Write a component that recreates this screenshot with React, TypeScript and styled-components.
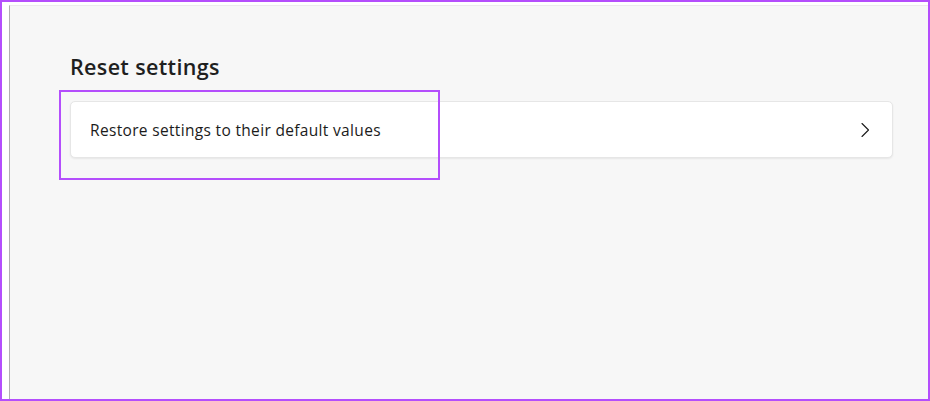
import styled, { createGlobalStyle } from "styled-components";

const GlobalStyle = createGlobalStyle`
  html, body {
    margin: 0;
    padding: 0;
    background: #ffffff;
  }
  #root {
    width: 930px;
    height: 401px;
  }
`;

const Frame = styled.div`
  box-sizing: border-box;
  width: 930px;
  height: 401px;
  border: 2px solid #b44efc;
  background: #ffffff;
  padding: 3px 0 0 7px;
  display: flex;
`;

const Window = styled.div`
  position: relative;
  flex: 1;
  box-sizing: border-box;
  background: #f7f7f7;
  border-top: 1px solid #ebebeb;
  border-left: 1px solid #b0b0b0;
  padding: 43px 35px 0 60px;
  font-family: "Open Sans", "Noto Sans", sans-serif;
  color: #1b1b1b;
`;

const SectionTitle = styled.h2`
  margin: 0 0 16px 0;
  font-size: 21.5px;
  font-weight: 600;
  line-height: 36px;
  letter-spacing: 0.35px;
  color: #1f1f1f;
`;

const Card = styled.button`
  box-sizing: border-box;
  width: 100%;
  height: 57px;
  display: flex;
  align-items: center;
  justify-content: space-between;
  padding: 0 22px 0 19px;
  background: #ffffff;
  border: 1px solid #e6e6e6;
  border-radius: 5px;
  box-shadow: 0 1px 2px rgba(0, 0, 0, 0.07);
  font-family: inherit;
  color: inherit;
  cursor: pointer;
  text-align: left;
`;

const CardLabel = styled.span`
  font-size: 15.5px;
  font-weight: 400;
  letter-spacing: 0.33px;
`;

const Chevron = styled.svg`
  width: 10px;
  height: 16px;
  flex-shrink: 0;
`;

const Highlight = styled.div`
  position: absolute;
  left: 49px;
  top: 84px;
  width: 381px;
  height: 90px;
  box-sizing: border-box;
  border: 2px solid #b44efc;
  pointer-events: none;
`;

export default function App() {
  return (
    <>
      <GlobalStyle />
      <Frame>
        <Window>
          <SectionTitle>Reset settings</SectionTitle>
          <Card>
            <CardLabel>Restore settings to their default values</CardLabel>
            <Chevron viewBox="0 0 10 16" fill="none">
              <path d="M2 1.5 L8.5 8 L2 14.5" stroke="#1b1b1b" strokeWidth="1.1" strokeLinecap="round" strokeLinejoin="round" />
            </Chevron>
          </Card>
          <Highlight />
        </Window>
      </Frame>
    </>
  );
}
